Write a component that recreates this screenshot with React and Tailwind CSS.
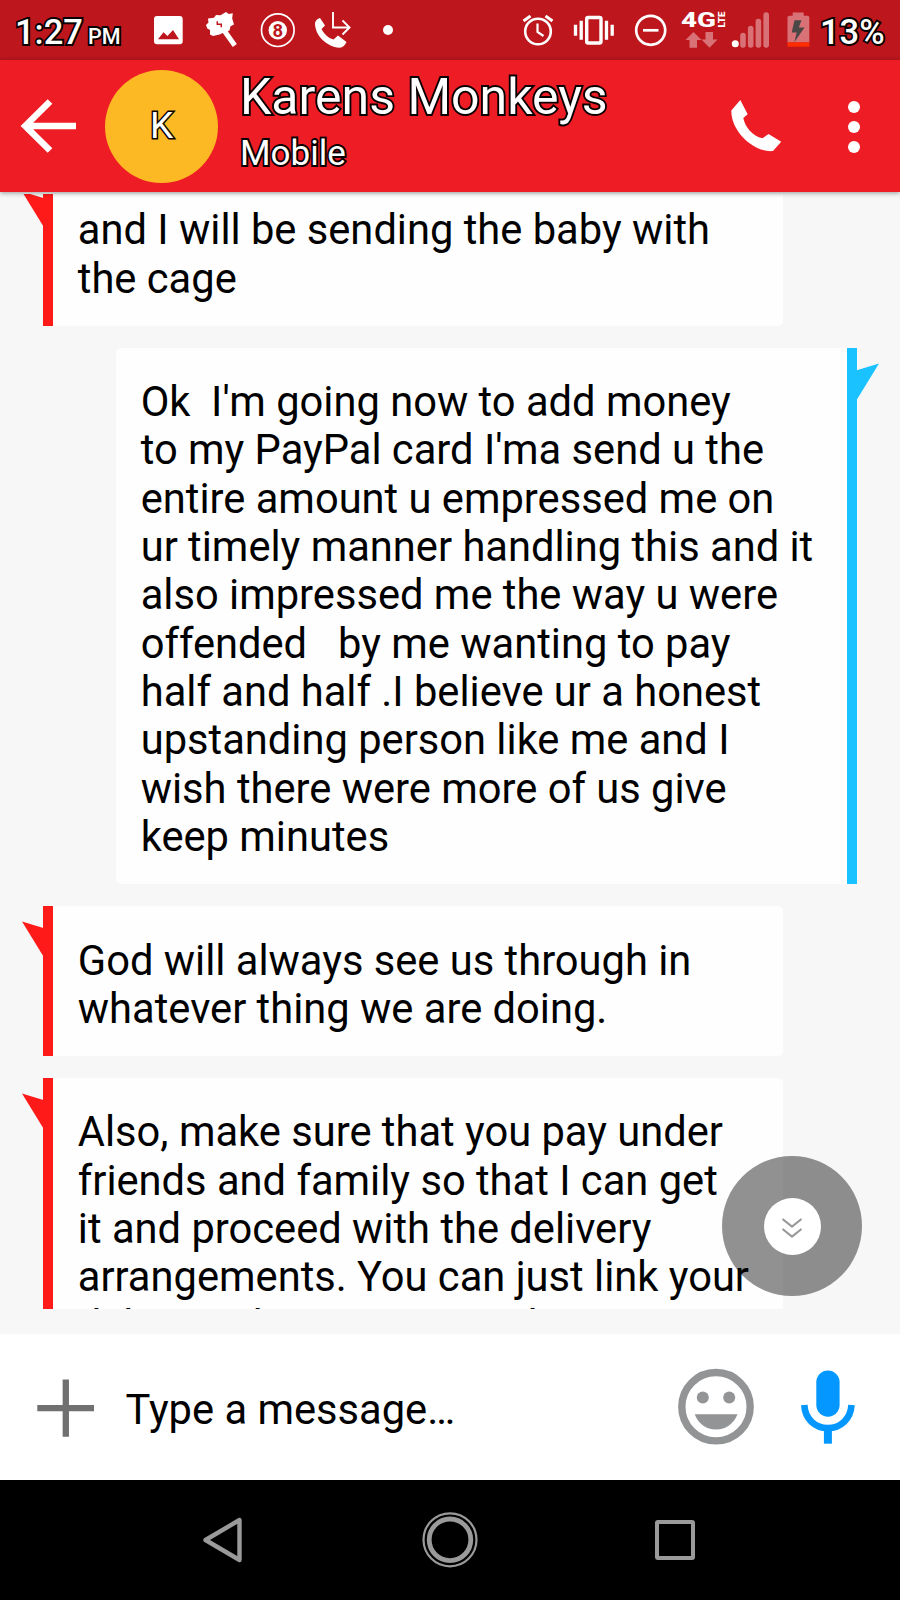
const OUTLINE = "[-webkit-text-stroke:3.8px_#0a0000] [paint-order:stroke_fill]";

/* ---------- status bar ---------- */

function StatusBar() {
  return (
    <div className="flex h-[60px] shrink-0 items-center bg-[#bd171d] text-white">
      <span className={"ml-[15px] w-[68px] pt-[5px] text-[34.5px] font-medium " + OUTLINE}>1:27</span>
      <span className={"ml-[5px] w-[33px] pt-[14px] text-[21.5px] font-medium " + OUTLINE}>PM</span>

      <svg className="ml-[33px] h-[60px] w-[29px] shrink-0" viewBox="154 0 29 60">
        <rect x="154" y="16" width="28.7" height="28.3" rx="3" fill="#fff" />
        <path d="M158 39.3L163.5 32.3L167.5 36L173 30L179 39.3Z" fill="#bd171d" />
      </svg>
      <svg className="ml-[22px] h-[60px] w-[34px] shrink-0" viewBox="205 0 34 60">
        <path d="M206 25L208.500 22.500L208 18.500L214 17.800L216 15L220.500 15.300L226 12L228.800 14L232.800 13.300L232.200 18.500L234 24.500L230.500 26.300L229.500 30.500L224 32.500L219.500 34.500L213 36L210 34.500L210 30L207.300 28.500Z" fill="#fff" />
        <path d="M224.500 31L234.800 45.500" stroke="#fff" strokeWidth="5" />
        <path d="M217.300 21.300V24.300H221.300V27.300" stroke="#bd171d" strokeWidth="1.500" fill="none" />
      </svg>
      <svg className="ml-[21px] h-[60px] w-[36px] shrink-0" viewBox="260.500 0 36 60">
        <circle cx="278.300" cy="30.200" r="16.300" fill="none" stroke="#fff" strokeWidth="1.700" />
        <circle cx="278.300" cy="30.200" r="9.200" fill="#fff" />
        <text x="278.300" y="36.700" textAnchor="middle" fontSize="18.500" fontWeight="700" fill="#bd171d">8</text>
      </svg>
      <svg className="ml-[18px] h-[60px] w-[38px] shrink-0" viewBox="314.500 0 38 60">
        <path d="M315.500 23C316 20.500 318 18.500 320.500 18L325.500 25.500L322 29C324.500 34 328.500 38 334 39.500L338.500 35.500L347 42C345.500 45.500 343.500 47.500 340 47.800C327 46.500 315.500 36 315.500 23Z" fill="#fff" />
        <path d="M333.500 12V27.500H349.500M343 20.500L350 27.500L343 34.500" stroke="#fff" strokeWidth="1.900" fill="none" />
      </svg>
      <span className="ml-[31px] h-[10px] w-[10px] shrink-0 rounded-full bg-white" />

      <svg className="ml-[128.500px] h-[60px] w-[32px] shrink-0" viewBox="522 0 32 60" fill="none" stroke="#fff">
        <circle cx="538" cy="31.500" r="12.800" strokeWidth="2.600" />
        <path d="M537.500 23.500V32L543.500 36" strokeWidth="2.200" />
        <path d="M523.500 21L530.500 16M545.500 16L552.500 21" strokeWidth="3" />
      </svg>
      <svg className="ml-[19.500px] h-[60px] w-[42px] shrink-0" viewBox="573.500 0 42 60">
        <rect x="587.200" y="17.500" width="14.300" height="25.500" rx="1.500" fill="none" stroke="#fff" strokeWidth="3.400" />
        <path d="M576 24.700V35.700M581.700 20.700V39.700M607 20.700V39.700M612.700 24.700V35.700" stroke="#fff" strokeWidth="3.300" />
      </svg>
      <svg className="ml-[19px] h-[60px] w-[34px] shrink-0" viewBox="634.500 0 34 60" fill="none" stroke="#fff" strokeWidth="2.700">
        <circle cx="651.200" cy="30.300" r="14.500" />
        <path d="M643.500 30.300H659" />
      </svg>
      <svg className="ml-[12px] h-[60px] w-[46px] shrink-0" viewBox="680.500 0 46 60">
        <text x="681.500" y="26.500" fontSize="19.500" fontWeight="800" textLength="35" lengthAdjust="spacingAndGlyphs" fill="#fff">4G</text>
        <text transform="translate(725 27.500) rotate(-90)" fontSize="9" fontWeight="900" textLength="16" lengthAdjust="spacingAndGlyphs" fill="#fff">LTE</text>
        <path d="M694 32L702 40H697.500V47.700H690V40H686ZM706 32H713.500V39.500H718L710 47.700L702 39.500H706Z" fill="#d97277" />
      </svg>
      <svg className="ml-[5px] h-[60px] w-[39px] shrink-0" viewBox="731.500 0 39 60">
        <path d="M743.500 35.500V45M751.200 28.500V45M758.900 21.500V45M766.700 15V45" stroke="#d97277" strokeWidth="5.600" strokeLinecap="round" />
        <circle cx="735.800" cy="43.700" r="3.500" fill="#fff" />
      </svg>
      <svg className="ml-[16.500px] h-[60px] w-[23px] shrink-0" viewBox="787 0 23 60">
        <path d="M787.500 17.500Q787.500 15.700 789.500 15.700H792.700V12.500H803.700V15.700H807.500Q809.300 15.700 809.300 17.500V42.500H787.500Z" fill="#d97277" />
        <path d="M787.500 42.300H809.300V46.700H787.500Z" fill="#ff2d00" />
        <path d="M794.500 20.300H801.500L798.800 27.500H804.500L794.300 42.300L796.700 32.500H791.700Z" fill="#4b4747" />
      </svg>
      <span className={"ml-[10.500px] pt-[5px] text-[34.5px] font-medium " + OUTLINE}>13%</span>
    </div>
  );
}

/* ---------- conversation header ---------- */

function Header() {
  return (
    <header className="relative z-10 flex h-[132px] shrink-0 bg-[#ee1d25] shadow-[0_1px_5px_rgba(0,0,0,0.4)]">
      <svg className="ml-[19px] h-[132px] w-[60px] shrink-0" viewBox="19 60 60 132" fill="none" stroke="#fff" strokeWidth="6.600">
        <path d="M50 101.500L25.300 126L50 150.500M25 126H76" />
      </svg>
      <div className="mt-[10px] ml-[26px] flex h-[113px] w-[113px] shrink-0 items-center justify-center rounded-full bg-[#fdb924] pb-[1px] text-[37px] text-white [-webkit-text-stroke:3px_#0a0000] [paint-order:stroke_fill]">
        K
      </div>
      <div className="mt-[4px] ml-[22px] w-[480px]">
        <h1 className={"text-[50px] leading-[66px] text-white " + OUTLINE}>Karens Monkeys</h1>
        <p className={"text-[35px] leading-[48px] text-white " + OUTLINE}>Mobile</p>
      </div>
      <svg className="ml-[8px] h-[132px] w-[56px] shrink-0" viewBox="728 60 56 132">
        <path d="M731.300 110.500L740.300 100L747.700 114.300L743.300 118C745 127 752.500 136 762.500 138.300L768.500 134L781.200 141.700L773 151C755 153 731 132 731.300 110.500Z" fill="#fff" />
      </svg>
      <div className="mt-[40.500px] ml-[64px] flex flex-col gap-[8px]">
        <span className="h-[12px] w-[12px] rounded-full bg-white" />
        <span className="h-[12px] w-[12px] rounded-full bg-white" />
        <span className="h-[12px] w-[12px] rounded-full bg-white" />
      </div>
    </header>
  );
}

/* ---------- messages ---------- */

const RECEIVED =
  "relative ml-[43.3px] w-[740px] shrink-0 rounded-r-[5px] border-l-[10px] border-[#ff1a1a] bg-[#fefefe] pt-[30.6px] pb-[22.9px] pl-[24.5px]";
const SENT =
  "relative ml-[116px] w-[741px] shrink-0 rounded-l-[5px] border-r-[10px] border-[#1ac2ff] bg-[#fefefe] pt-[30.6px] pb-[22.9px] pl-[24.7px]";

function Message({ sent, lines }) {
  return (
    <div className={sent ? SENT : RECEIVED}>
      {sent ? (
        <svg className="absolute top-[15.500px] -right-[31.500px] h-[38px] w-[23px]" viewBox="0 0 23 38">
          <path d="M23 0.500L0 7.500V38Z" fill="#1ac2ff" />
        </svg>
      ) : (
        <svg className="absolute top-[15.500px] -left-[31.500px] h-[38px] w-[23px]" viewBox="0 0 23 38">
          <path d="M0 0.500L23 7.500V38Z" fill="#ff1a1a" />
        </svg>
      )}
      {lines.map((line) => (
        <p key={line} className="h-[48.33px] text-[41.67px] leading-[48.33px] whitespace-pre text-black">
          {line}
        </p>
      ))}
    </div>
  );
}

const THREAD = [
  { lines: ["and I will be sending the baby with", "the cage"] },
  {
    sent: true,
    lines: [
      "Ok  I'm going now to add money",
      "to my PayPal card I'ma send u the",
      "entire amount u empressed me on",
      "ur timely manner handling this and it",
      "also impressed me the way u were",
      "offended   by me wanting to pay",
      "half and half .I believe ur a honest",
      "upstanding person like me and I",
      "wish there were more of us give",
      "keep minutes",
    ],
  },
  { lines: ["God will always see us through in", "whatever thing we are doing."] },
  {
    lines: [
      "Also, make sure that you pay under",
      "friends and family so that I can get",
      "it and proceed with the delivery",
      "arrangements. You can just link your",
      "debit card to your PayPal",
    ],
  },
];

function ScrollDown() {
  return (
    <button className="absolute top-[964.300px] left-[722.300px] flex h-[140px] w-[140px] items-center justify-center rounded-full bg-black/[0.427]">
      <span className="flex h-[57.500px] w-[57.500px] items-center justify-center rounded-full bg-white">
        <svg className="h-[24px] w-[24px]" viewBox="0 0 24 24" fill="none" stroke="#999" strokeWidth="2.200">
          <path d="M2.500 5L12 12.500L21.500 5M2.500 15L12 22.500L21.500 15" />
        </svg>
      </span>
    </button>
  );
}

/* ---------- composer and navigation ---------- */

function Composer() {
  return (
    <div className="flex h-[146px] shrink-0 items-center bg-white">
      <svg className="ml-[37px] h-[146px] w-[58px] shrink-0" viewBox="37 1334 58 146">
        <path d="M37.300 1408.200H94M65.800 1379.500V1436.700" stroke="#707070" strokeWidth="6.300" />
      </svg>
      <span className="ml-[30.500px] w-[500px] pt-[5px] text-[41.67px] leading-[50px] text-black">Type a message…</span>
      <svg className="ml-[50.500px] h-[146px] w-[80px] shrink-0" viewBox="676 1334 80 146">
        <circle cx="716" cy="1406.700" r="34.200" fill="none" stroke="#929495" strokeWidth="7.400" />
        <circle cx="702.800" cy="1397.500" r="6" fill="#929495" />
        <circle cx="729.200" cy="1397.500" r="6" fill="#929495" />
        <path d="M694.700 1414.300H737.500C733.500 1424 726 1429.500 716 1429.500C706 1429.500 698.500 1424 694.700 1414.300Z" fill="#929495" />
      </svg>
      <svg className="ml-[44px] h-[146px] w-[56px] shrink-0" viewBox="800 1334 56 146">
        <rect x="816.300" y="1370.500" width="23.300" height="46.200" rx="11.600" fill="#0397ff" />
        <path d="M804.300 1405C805 1418.500 814.500 1428 827.800 1428C841.100 1428 850.700 1418.500 851.500 1405" fill="none" stroke="#0397ff" strokeWidth="6.600" />
        <path d="M827.900 1428V1443.700" stroke="#0397ff" strokeWidth="8" />
      </svg>
    </div>
  );
}

function NavBar() {
  return (
    <nav className="flex h-[120px] shrink-0 items-center bg-black">
      <svg className="ml-[200px] h-[60px] w-[46px] shrink-0" viewBox="200 1510 46 60" fill="none">
        <path d="M205.500 1540L239.500 1520V1560Z" stroke="#9a9a9a" strokeWidth="4.400" strokeLinejoin="round" />
      </svg>
      <svg className="ml-[174px] h-[60px] w-[60px] shrink-0" viewBox="420 1510 60 60" fill="none" stroke="#9a9a9a">
        <circle cx="450" cy="1539.800" r="26.500" strokeWidth="2.200" />
        <circle cx="450" cy="1539.800" r="20.800" strokeWidth="4.800" />
      </svg>
      <span className="ml-[175px] h-[40px] w-[40px] rounded-[3px] border-4 border-[#9a9a9a]" />
    </nav>
  );
}

export default function App() {
  return (
    <div className="flex h-[1600px] w-[900px] flex-col overflow-hidden bg-[#f7f7f7] font-['Roboto',sans-serif]">
      <StatusBar />
      <Header />
      <main className="relative h-[1142px] shrink-0 pt-[2px]">
        <div className="flex h-[1115px] flex-col gap-[21.700px] overflow-hidden">
          <div className="-mt-[40px]" />
          {THREAD.map((m) => (
            <Message key={m.lines[0]} sent={m.sent} lines={m.lines} />
          ))}
        </div>
        <ScrollDown />
      </main>
      <Composer />
      <NavBar />
    </div>
  );
}
